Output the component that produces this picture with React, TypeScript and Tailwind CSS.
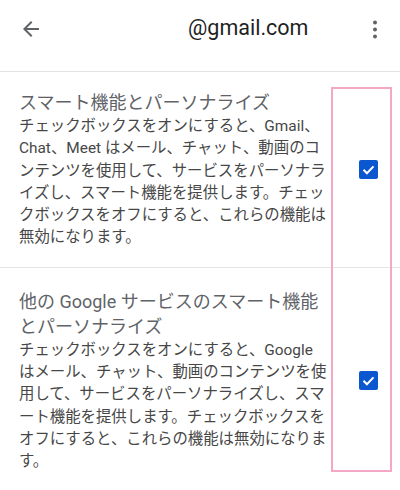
const sections = [
  {
    title: "スマート機能とパーソナライズ",
    body: "チェックボックスをオンにすると、Gmail、Chat、Meet はメール、チャット、動画のコンテンツを使用して、サービスをパーソナライズし、スマート機能を提供します。チェックボックスをオフにすると、これらの機能は無効になります。",
  },
  {
    title: "他の Google サービスのスマート機能とパーソナライズ",
    body: "チェックボックスをオンにすると、Google はメール、チャット、動画のコンテンツを使用して、サービスをパーソナライズし、スマート機能を提供します。チェックボックスをオフにすると、これらの機能は無効になります。",
  },
]

function Checkbox() {
  return (
    <div className="flex h-[19px] w-[19px] items-center justify-center rounded-[2px] bg-[#0b57d0]">
      <svg width="15" height="15" viewBox="0 0 24 24" fill="none" stroke="white" strokeWidth="3.2" aria-hidden>
        <polyline points="4 12.5 9.5 18 20 7" />
      </svg>
    </div>
  )
}

export default function App() {
  return (
    <div
      className="relative h-[490px] w-[400px] overflow-hidden bg-white"
      style={{ fontFamily: "Roboto, 'Noto Sans CJK JP', sans-serif" }}
    >
      <header className="flex h-[72px] items-center border-b border-[#e3e3e3] pb-[14px]">
        <svg className="ml-[19px] text-[#5f6368]" width="24" height="24" viewBox="0 0 24 24" fill="currentColor" aria-hidden>
          <path d="M20 11H7.83l5.59-5.59L12 4l-8 8 8 8 1.41-1.41L7.83 13H20v-2z" />
        </svg>
        <span className="ml-[145px] text-[21.5px] text-[#1f1f1f]">@gmail.com</span>
        <svg className="ml-auto mr-[13px] text-[#5f6368]" width="24" height="24" viewBox="0 0 24 24" fill="currentColor" aria-hidden>
          <circle cx="12" cy="5.5" r="2" />
          <circle cx="12" cy="12.5" r="2" />
          <circle cx="12" cy="19.5" r="2" />
        </svg>
      </header>

      {sections.map((s, i) => (
        <section
          key={s.title}
          className={
            i === 0
              ? "flex items-center border-b border-[#e3e3e3] pt-[18px] pb-[18px]"
              : "flex items-center pt-[21px] pb-[17px]"
          }
        >
          <div className="ml-[19px] w-[309px]">
            <h2 className="text-[18px] leading-[25px] text-[#5f6368]">{s.title}</h2>
            <p className="text-[15.4px] leading-[22.3px] text-[#474747]">{s.body}</p>
          </div>
          <div className="flex flex-1 justify-center pl-[8px]">
            <Checkbox />
          </div>
        </section>
      ))}

      <div className="pointer-events-none absolute left-[331px] top-[87px] h-[385px] w-[61px] border-2 border-[#f5a8c5]" />
    </div>
  )
}
